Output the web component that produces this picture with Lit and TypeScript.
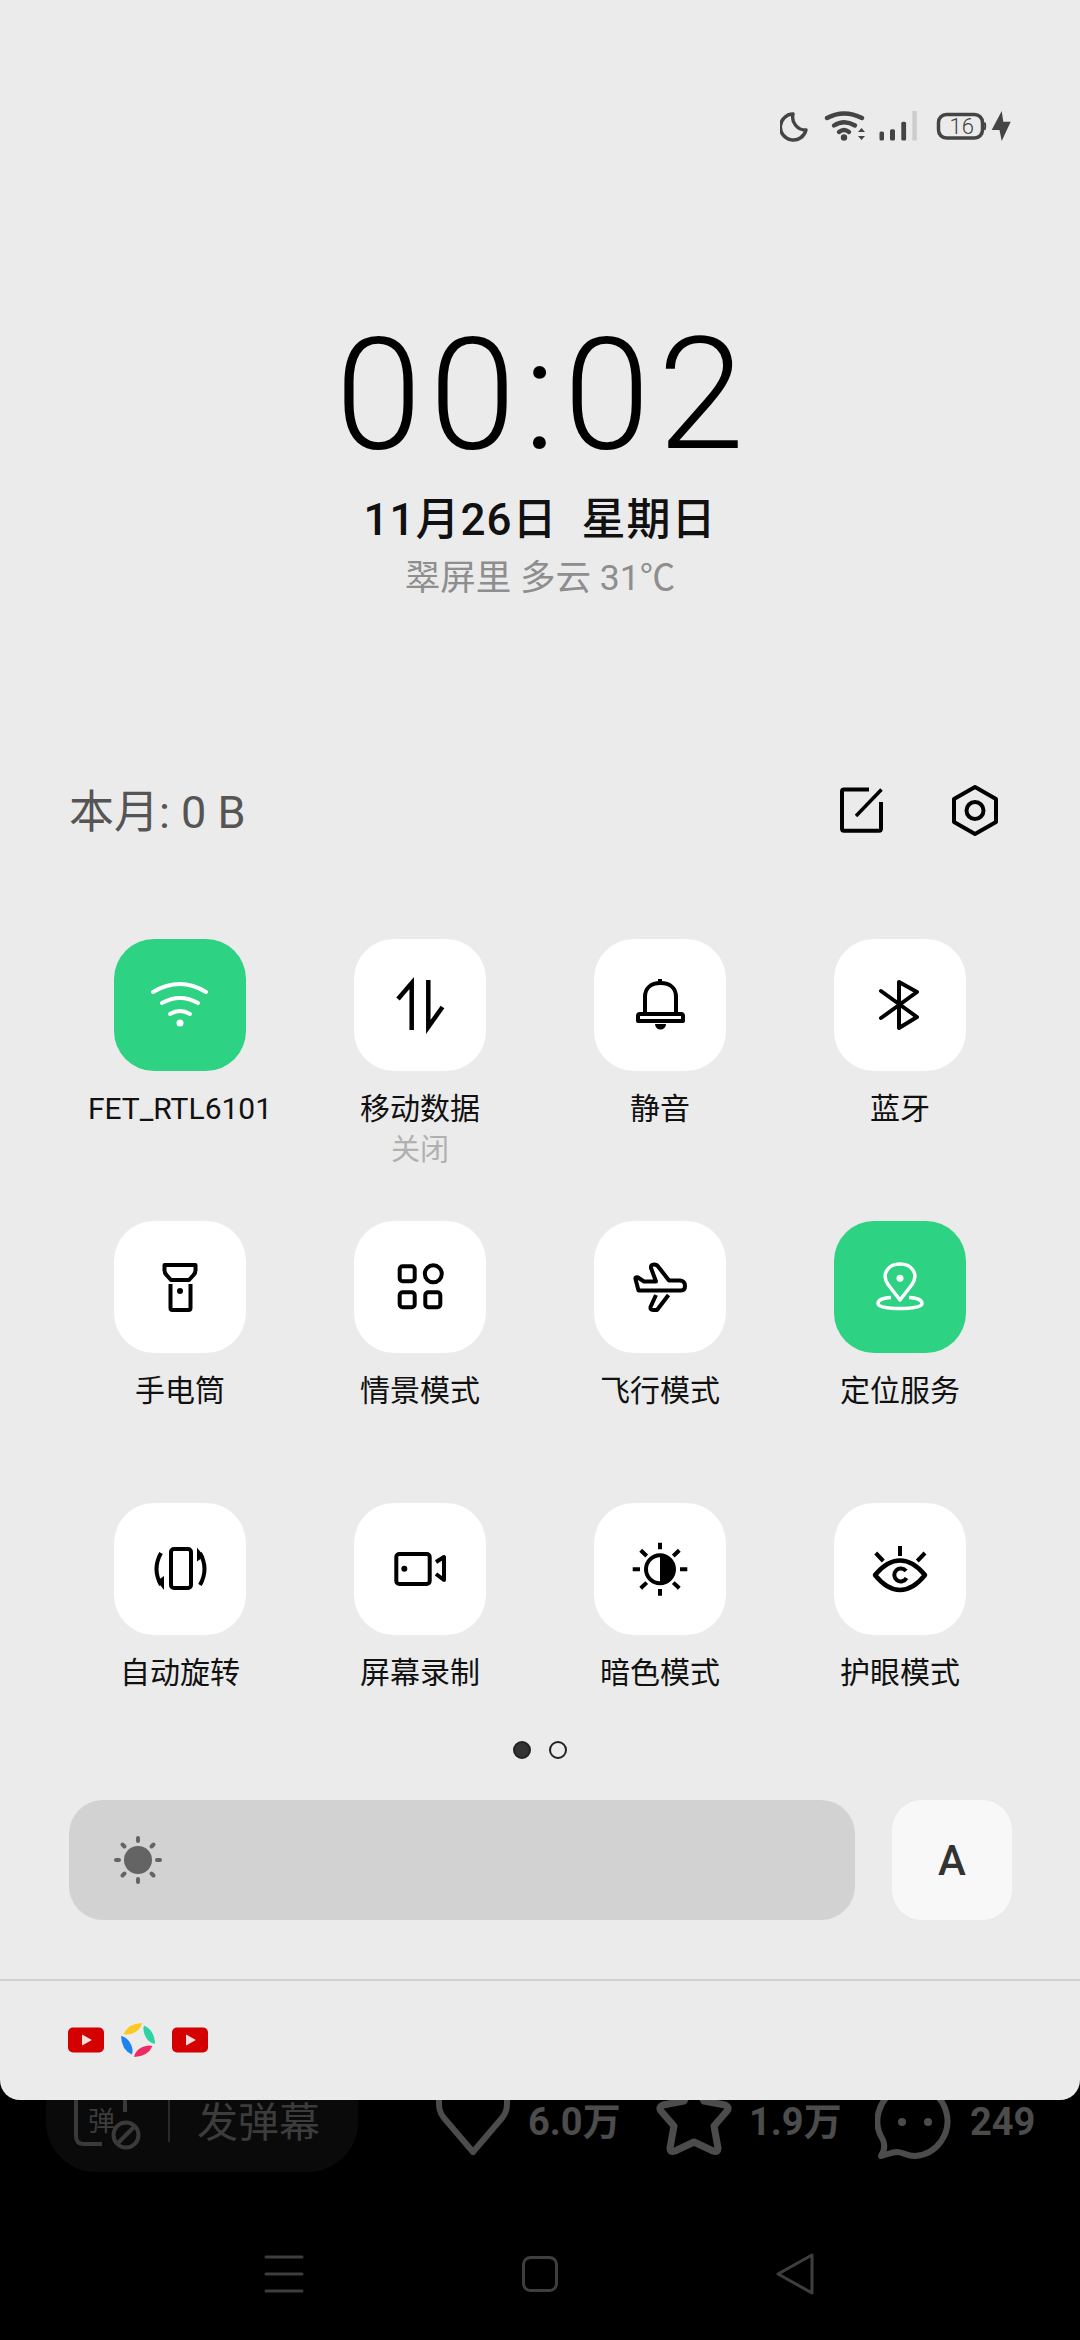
import { LitElement, html, css, svg } from "lit";
import { customElement } from "lit/decorators.js";

const ic = (body: unknown) => html`<svg class="ic" viewBox="0 0 132 132" width="132" height="132" fill="none" stroke="currentColor" stroke-width="4">${body}</svg>`;

const wifi = svg`<g stroke-linecap="round"><path d="M39 53Q66 37 92 53"/><path d="M48 64Q66 54 84 64"/><path d="M56 75Q66 69 76 75"/></g><circle cx="66" cy="84" r="3.5" fill="currentColor" stroke="none"/>`;
const data = svg`<path stroke-width="4.5" d="M44 60L57.7 44V91"/><path stroke-width="4.5" d="M74.3 41V88L88.5 68"/>`;
const bell = svg`<path d="M51 76V58C51 49 57 44 66.5 44C76 44 82 49 82 58V76"/><path d="M46 75H87Q89 75 89 77V82H44V77Q44 75 46 75Z" stroke-linejoin="round"/><path d="M66 40V44"/><path d="M61 85A5.5 5.5 0 0 0 72 85Z" fill="currentColor" stroke="none"/>`;
const bt = svg`<path d="M47 52L83 78L65 89V43L83 53L47 79" stroke-linejoin="round" stroke-linecap="round"/>`;
const torch = svg`<path d="M50.5 44H81.5V49Q81.5 52 79.5 54L75 59H57L52.5 54Q50.5 52 50.5 49Z" stroke-linejoin="round"/><path d="M56.5 63V87Q56.5 89 58.5 89H74.5Q76.5 89 76.5 87V63"/><circle cx="66" cy="70" r="3" fill="currentColor" stroke="none"/>`;
const scenes = svg`<rect x="45.7" y="45.3" width="15" height="15" rx="3"/><circle cx="79.3" cy="52.8" r="8.5"/><rect x="45.7" y="71.3" width="15" height="15" rx="3"/><rect x="71.3" y="71.3" width="15" height="15" rx="3"/>`;
const plane = svg`<g stroke-linejoin="round"><path d="M41.5 58Q41 55.5 44 56.5L50 60.5H62L57 47Q56.5 43.5 60 43.5Q63 43.5 64.5 46L75 59.5H86Q91 60 91 65Q91 69.5 87 69.5H44.5Z"/><path d="M62 74L56.5 86Q56 89 59 89H63L74.5 74"/></g>`;
const loc = svg`<path d="M66 79L54 63.5C47 53 54 43 66 43C78 43 85 53 78 63.5Z" stroke-width="3.5" stroke-linejoin="round"/><circle cx="66" cy="57.3" r="3.5" fill="currentColor" stroke="none"/><path stroke-width="3.5" d="M57 76.5C47 77 44 80 44 82.5C44 85.5 52 87.5 66 87.5C80 87.5 88 85.5 88 82.5C88 80 85 77 75 76.5"/>`;
const rotate = svg`<rect x="57" y="46" width="20" height="39" rx="3"/><path d="M47 50Q38 66 47 82"/><path d="M50 87V73L43 78Z" fill="currentColor" stroke="none"/><path d="M86 82Q95 66 86 50"/><path d="M83 44.5V58.5L90 53.5Z" fill="currentColor" stroke="none"/>`;
const cam = svg`<rect x="42.3" y="51" width="33.4" height="30" rx="3"/><circle cx="50.3" cy="65.7" r="3" fill="currentColor" stroke="none"/><path d="M82 59L90 54V77L82 71" stroke-linejoin="round"/>`;
const halfSun = svg`<circle cx="66" cy="66.3" r="14"/><path d="M66 52.3A14 14 0 0 1 66 80.3Z" fill="currentColor" stroke="none"/><path d="M66 39.7V46.3M66 86V92.7M38.7 66.3H46M86 66.3H93.3M46.7 47.3L52.7 53M85.3 47.3L79.3 53M46.7 85.3L52.7 79.6M85.3 85.3L79.3 79.6"/>`;
const eye = svg`<path d="M41 72Q53 57.5 66 57.5Q79 57.5 91 72Q79 87 66 87Q53 87 41 72Z" stroke-width="4.5" stroke-linejoin="round"/><path d="M72 68A6.5 6.5 0 1 0 72.5 75" stroke-width="4"/><path d="M66 43V53M41.7 50L49.3 58M91 50L83.3 58"/>`;

const tiles = [
  { label: "FET_RTL6101", icon: wifi, on: true, sub: "" },
  { label: "移动数据", icon: data, on: false, sub: "关闭" },
  { label: "静音", icon: bell, on: false, sub: "" },
  { label: "蓝牙", icon: bt, on: false, sub: "" },
  { label: "手电筒", icon: torch, on: false, sub: "" },
  { label: "情景模式", icon: scenes, on: false, sub: "" },
  { label: "飞行模式", icon: plane, on: false, sub: "" },
  { label: "定位服务", icon: loc, on: true, sub: "" },
  { label: "自动旋转", icon: rotate, on: false, sub: "" },
  { label: "屏幕录制", icon: cam, on: false, sub: "" },
  { label: "暗色模式", icon: halfSun, on: false, sub: "" },
  { label: "护眼模式", icon: eye, on: false, sub: "" },
];

const yt = html`<svg width="36" height="36" viewBox="0 0 36 36"><rect x="0" y="5.5" width="36" height="25" rx="5" fill="#d40000"/><path d="M14 12.5L24 18L14 23.5Z" fill="#f6dcdc"/></svg>`;
const petal = "M3.5 12Q8 1.5 22 1Q20.5 8 13.5 11Q8 13.5 3.5 12Z";
const mix = html`<svg width="36" height="36" viewBox="0 0 36 36"><path d=${petal} fill="#fcc923"/><path d=${petal} fill="#2ed3a3" transform="rotate(90 18 18)"/><path d=${petal} fill="#ee2a63" transform="rotate(180 18 18)"/><path d=${petal} fill="#1e83ee" transform="rotate(270 18 18)"/></svg>`;

@customElement("app-root")
export class AppRoot extends LitElement {
  static styles = css`
    :host { display: block; width: 1080px; height: 2340px; background: #000; overflow: hidden;
      font-family: Roboto, "Noto Sans CJK SC", sans-serif; }
    .panel { height: 2100px; background: #ebebeb; border-radius: 0 0 20px 20px; display: flex; flex-direction: column; position: relative; z-index: 1; }
    .status { display: flex; justify-content: flex-end; padding: 110px 68px 0 0; height: 32px; color: #444; }
    .status svg { display: block; }
    .s-moon { margin-right: 15px; } .s-wifi { margin-right: 11px; } .s-sig { margin-right: 17px; } .s-bat { margin-right: 3px; }
    .bat-text { font: 300 22px Roboto, sans-serif; fill: #444; }
    .clock { margin-top: 173px; padding-left: 7px; font-weight: 300; font-size: 156px; line-height: 160px; letter-spacing: 7.5px; text-align: center; color: #000; }
    .date { margin-top: 20px; font-size: 44px; line-height: 50px; letter-spacing: 1px; font-weight: 500; text-align: center; color: #111; white-space: pre; }
    .weather { margin-top: 8px; font-size: 35.5px; line-height: 50px; text-align: center; color: #8e8e8e; }
    .head { margin-top: 178px; height: 60px; display: flex; align-items: center; padding: 0 75px 0 69px; }
    .month { flex: 1; font-size: 45px; line-height: 58px; padding-top: 3px; color: #555; }
    .head svg { display: block; margin-left: 54px; color: #000; }
    .edit { transform: translateX(1px); }
    .grid { margin-top: 98px; padding-left: 60px; display: grid; grid-template-columns: repeat(4, 240px); grid-template-rows: 282px 282px 228px; }
    .cell { display: flex; flex-direction: column; align-items: center; }
    .tile { width: 132px; height: 132px; border-radius: 40px; background: #fff; color: #000; }
    .tile.on { background: #2dd283; color: #fff; }
    .ic { display: block; }
    .label { margin-top: 16px; font-size: 30px; line-height: 44px; color: #111; }
    .sub { font-size: 29px; line-height: 38px; color: #b0b0b0; }
    .dots { margin-top: 10px; display: flex; justify-content: center; gap: 18px; }
    .dot { width: 18px; height: 18px; border-radius: 50%; box-sizing: border-box; border: 2px solid #222; }
    .dot.active { background: #333; }
    .bright { margin-top: 41px; padding: 0 68px 0 69px; display: flex; justify-content: space-between; }
    .slider { width: 786px; height: 120px; border-radius: 34px; background: #d2d2d2; display: flex; align-items: center; padding-left: 39px; box-sizing: border-box; }
    .slider svg { display: block; }
    .auto { width: 120px; height: 120px; border-radius: 30px; background: #f8f8f8; display: flex; align-items: center; justify-content: center; font-size: 42px; font-weight: 500; color: #333; }
    .divider { margin-top: 59px; height: 2px; background: #cfcfcf; }
    .apps { padding: 41px 0 0 68px; display: flex; gap: 16px; }
    .apps svg { display: block; }
    .behind { height: 240px; overflow: hidden; }
    .row { margin-top: -60px; height: 132px; display: flex; padding-left: 46px; }
    .pill { flex: none; width: 312px; height: 132px; border-radius: 50px; background: #0a0a0a; display: flex; align-items: flex-end; box-sizing: border-box; padding: 0 0 0 24px; }
    .pill svg { display: block; }
    .pill-text { font: 400 27px "Noto Sans CJK SC", sans-serif; fill: #3c3c3c; stroke: none; }
    .sep { width: 2px; height: 102px; background: #2a2a2a; margin: 0 27px 30px 18px; }
    .dan { font-size: 41px; line-height: 60px; color: #3c3c3c; margin-bottom: 19px; }
    .stats { flex: none; margin: 40px 0 0 75px; display: grid; grid-template-columns: 221px 221px 205px; height: 80px; }
    .stat { display: flex; align-items: center; gap: 15px; color: #4c4c4c; font-size: 38px; font-weight: 700; }
    .stat svg { display: block; flex: none; }
    .num { line-height: 40px; margin-top: 4px; }
    .nav { margin-top: 72px; padding-left: 156px; display: grid; grid-template-columns: repeat(3, 256px); }
    .nav svg { display: block; justify-self: center; color: #3e3e3e; }
  `;

  render() {
    return html`
      <div class="panel">
        <div class="status">
          <svg class="s-moon" width="28" height="32" viewBox="0 0 28 32" fill="none" stroke="currentColor" stroke-width="3.4" stroke-linejoin="round"><path d="M13 4A13 13 0 1 0 26 20A13 13 0 0 1 13 4Z"/></svg>
          <svg class="s-wifi" width="44" height="32" viewBox="0 0 44 32" fill="none" stroke="currentColor" stroke-width="4.4" stroke-linecap="round"><path d="M4 8Q21 -1 39 8"/><path d="M11 15.5Q21 9 32 15.5"/><path d="M16 22Q21 18 26 22"/><circle cx="21" cy="27.5" r="3.2" fill="currentColor" stroke="none"/><path d="M35 22L38.5 18L42 22ZM35 26L38.5 30L42 26Z" fill="currentColor" stroke="none"/></svg>
          <svg class="s-sig" width="40" height="32" viewBox="0 0 40 32"><rect x="1.5" y="21.5" width="4.5" height="9" rx="1.5" fill="#444"/><rect x="12" y="19.3" width="5" height="11.2" rx="1.5" fill="#444"/><rect x="23.3" y="11.7" width="4.8" height="18.8" rx="1.5" fill="#444"/><rect x="34.3" y="1" width="4.5" height="29.5" fill="#cdcdcd"/></svg>
          <svg class="s-bat" width="52" height="32" viewBox="0 0 52 32" fill="none"><rect x="3.5" y="4.5" width="44" height="23.5" rx="8" stroke="#444" stroke-width="3.5"/><path d="M49.5 12.5Q51 16 49.5 20" stroke="#444" stroke-width="2"/><text class="bat-text" x="26.7" y="23.5" text-anchor="middle">16</text></svg>
          <svg width="22" height="32" viewBox="0 0 22 32"><path d="M11.7 1L1.7 20H9.5L11.7 31L20.7 11.7H13.3Z" fill="#444"/></svg>
        </div>
        <div class="clock">00:02</div>
        <div class="date">11月26日  星期日</div>
        <div class="weather">翠屏里 多云 31℃</div>
        <div class="head">
          <div class="month">本月: 0 B</div>
          <svg class="edit" width="60" height="60" viewBox="0 0 60 60" fill="none" stroke="currentColor" stroke-width="4"><path d="M37 8.5H12Q10 8.5 10 10.5V47.5Q10 49.7 12 49.7H47Q49 49.7 49 47.5V21"/><path d="M49.5 8.5L24 35" stroke-width="3.5"/></svg>
          <svg width="60" height="60" viewBox="0 0 60 60" fill="none" stroke="currentColor" stroke-width="4" stroke-linejoin="round"><path d="M30 6L51 18V41L30 53L9 41V18Z"/><circle cx="30" cy="29.5" r="8.5"/></svg>
        </div>
        <div class="grid">
          ${tiles.map(
            (t) => html`<div class="cell">
              <div class="tile ${t.on ? "on" : ""}">${ic(t.icon)}</div>
              <div class="label">${t.label}</div>
              ${t.sub ? html`<div class="sub">${t.sub}</div>` : ""}
            </div>`
          )}
        </div>
        <div class="dots"><div class="dot active"></div><div class="dot"></div></div>
        <div class="bright">
          <div class="slider">
            <svg width="60" height="60" viewBox="0 0 60 60" fill="#646464" stroke="#646464"><circle cx="30" cy="30" r="14" stroke="none"/><path stroke-width="4" stroke-linecap="round" d="M30 8V11M30 49V52M8 30H11M49 30H52M14.5 14.5L16.5 16.5M45.5 14.5L43.5 16.5M14.5 45.5L16.5 43.5M45.5 45.5L43.5 43.5"/></svg>
          </div>
          <div class="auto">A</div>
        </div>
        <div class="divider"></div>
        <div class="apps">${yt}${mix}${yt}</div>
      </div>
      <div class="behind">
        <div class="row">
          <div class="pill">
            <svg width="80" height="132" viewBox="0 0 80 132" fill="none" stroke="#3a3a3a" stroke-width="4"><path d="M6 40V96Q6 104 14 104H32"/><path d="M55 50V72"/><text class="pill-text" x="18" y="91">弹</text><circle cx="56" cy="95" r="12.5"/><path d="M47 104L65 86"/></svg>
            <div class="sep"></div>
            <div class="dan">发弹幕</div>
          </div>
          <div class="stats">
            <div class="stat"><svg width="80" height="80" viewBox="0 0 80 80" fill="none" stroke="currentColor" stroke-width="6" stroke-linejoin="round"><path d="M40 72L11 38C6 32 6 27 6 22C6 5 25 0 40 14C55 0 74 5 74 22C74 27 74 32 69 38Z"/></svg><span class="num">6.0万</span></div>
            <div class="stat"><svg width="80" height="80" viewBox="0 0 80 80" fill="none" stroke="currentColor" stroke-width="7" stroke-linejoin="round"><path d="M40 2L50 21L71 25Q76 27 73 31L60 46L64 68Q64 73 59 71L40 62L21 71Q16 73 16 68L20 46L7 31Q4 27 9 25L30 21Z"/></svg><span class="num">1.9万</span></div>
            <div class="stat"><svg width="80" height="80" viewBox="0 0 80 80" fill="none" stroke="currentColor" stroke-width="6" stroke-linejoin="round"><path d="M6 76C10 70 10 65 8 60A35 35 0 1 1 40 76C32 76 27 72 22 72C16 72 12 75 6 76Z"/><circle cx="27" cy="42" r="4" fill="currentColor" stroke="none"/><circle cx="53" cy="42" r="4" fill="currentColor" stroke="none"/></svg><span class="num">249</span></div>
          </div>
        </div>
        <div class="nav">
          <svg width="60" height="60" viewBox="0 0 60 60" fill="none" stroke="currentColor" stroke-width="3" stroke-linecap="round"><path d="M12 13H48M12 30H48M12 47H48"/></svg>
          <svg width="60" height="60" viewBox="0 0 60 60" fill="none" stroke="currentColor" stroke-width="3"><rect x="13.5" y="13.5" width="33" height="33" rx="7"/></svg>
          <svg width="60" height="60" viewBox="0 0 60 60" fill="none" stroke="currentColor" stroke-width="3" stroke-linejoin="round"><path d="M12 30L46 11V49Z"/></svg>
        </div>
      </div>
    `;
  }
}
